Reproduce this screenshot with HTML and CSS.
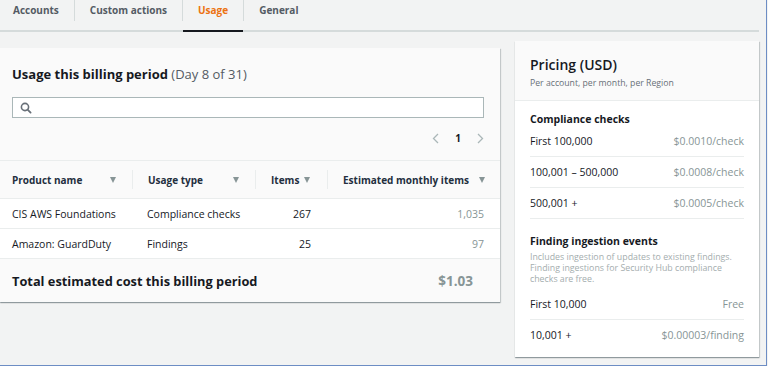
FILE: index.html
```html
<!DOCTYPE html>
<html lang="en">
  <head>
    <meta charset="UTF-8" />
    <meta name="viewport" content="width=device-width, initial-scale=1.0" />
    <title>Security Hub - Usage</title>
    <link rel="stylesheet" href="styles.css">
  </head>
  <body>
    <div class="frame">
      <div class="tabs">
        <div class="tab first">Accounts</div>
        <div class="tab-sep"></div>
        <div class="tab">Custom actions</div>
        <div class="tab-sep"></div>
        <div class="tab active">Usage</div>
        <div class="tab-sep"></div>
        <div class="tab">General</div>
      </div>

      <div class="content">
        <div class="panel usage">
          <div class="usage-head">
            <h2>Usage this billing period <span class="day">(Day 8 of 31)</span></h2>
            <div class="search">
              <svg width="12" height="12" viewBox="0 0 12 12">
                <circle cx="5" cy="5" r="3.6" fill="none" stroke="#687078" stroke-width="1.6" />
                <line x1="7.6" y1="7.6" x2="10.6" y2="10.6" stroke="#687078" stroke-width="1.8" stroke-linecap="round" />
              </svg>
            </div>
            <div class="pager">
              <svg width="7" height="11" viewBox="0 0 7 11"><polyline points="6,1 1.5,5.5 6,10" fill="none" stroke="#aab7b8" stroke-width="1.3" /></svg>
              <span class="page">1</span>
              <svg width="7" height="11" viewBox="0 0 7 11"><polyline points="1,1 5.5,5.5 1,10" fill="none" stroke="#aab7b8" stroke-width="1.3" /></svg>
            </div>
          </div>

          <div class="grid">
            <div class="th c1"><div class="th-in sep">Product name <i class="sort"></i></div></div>
            <div class="th c2"><div class="th-in sep">Usage type <i class="sort"></i></div></div>
            <div class="th c3"><div class="th-in sep">Items <i class="sort"></i></div></div>
            <div class="th c4"><div class="th-in">Estimated monthly items <i class="sort"></i></div></div>

            <div class="td c1">CIS AWS Foundations</div>
            <div class="td c2">Compliance checks</div>
            <div class="td c3 num">267</div>
            <div class="td c4 num muted">1,035</div>

            <div class="td c1">Amazon: GuardDuty</div>
            <div class="td c2">Findings</div>
            <div class="td c3 num">25</div>
            <div class="td c4 num muted">97</div>
          </div>

          <div class="usage-foot">
            <span>Total estimated cost this billing period</span>
            <span class="total">$1.03</span>
          </div>
        </div>

        <div class="panel pricing">
          <div class="pricing-head">
            <h2>Pricing (USD)</h2>
            <p>Per account, per month, per Region</p>
          </div>
          <div class="pricing-body">
            <h3>Compliance checks</h3>
            <div class="price-row"><span>First 100,000</span><span class="price">$0.0010/check</span></div>
            <div class="price-row"><span>100,001 – 500,000</span><span class="price">$0.0008/check</span></div>
            <div class="price-row"><span>500,001 +</span><span class="price">$0.0005/check</span></div>

            <h3 class="second">Finding ingestion events</h3>
            <p class="desc">Includes ingestion of updates to existing findings. Finding ingestions for Security Hub compliance checks are free.</p>
            <div class="price-row"><span>First 10,000</span><span class="price">Free</span></div>
            <div class="price-row last"><span>10,001 +</span><span class="price">$0.00003/finding</span></div>
          </div>
        </div>
      </div>
    </div>
  </body>
</html>
```

FILE: styles.css
```css
body {
  margin: 0;
  padding: 0;
  font-family: "Open Sans", "Noto Sans", sans-serif;
  background-color: #f2f3f3;
  color: #16191f;
}

.frame {
  width: 766px;
  height: 365px;
  border-right: 1px solid #6d8dc4;
  border-bottom: 1px solid #6d8dc4;
  overflow: hidden;
}

/* tabs */
.tabs {
  display: flex;
  width: 759px;
  height: 30px;
  border-bottom: 2px solid #d5dbdb;
}

.tab {
  padding: 0 15px;
  height: 30px;
  line-height: 21px;
  font-size: 10px;
  font-weight: 700;
  color: #545b64;
  white-space: nowrap;
}

.tab.first {
  padding-left: 13px;
}

.tab.active {
  color: #ec7211;
  border-bottom: 2px solid #16191f;
}

.tab-sep {
  width: 1px;
  height: 21px;
  background-color: #d5dbdb;
}

.content {
  display: flex;
  align-items: flex-start;
  gap: 15px;
}

.panel {
  background: #fff;
  box-shadow: 0 1px 1px 0 rgba(0, 28, 36, 0.3), 1px 1px 1px 0 rgba(0, 28, 36, 0.15);
}

/* usage panel */
.usage {
  width: 500px;
  margin-top: 16px;
}

.usage-head {
  background-color: #fafafa;
  padding: 18px 16px 12px 12px;
}

.usage-head h2 {
  margin: 0;
  font-size: 13px;
  line-height: 16px;
  font-weight: 700;
}

.usage-head .day {
  font-weight: 400;
  color: #545b64;
}

.search {
  margin-top: 15px;
  height: 19px;
  border: 1px solid #aab7b8;
  background: #fff;
  display: flex;
  align-items: center;
  padding-left: 7px;
}

.pager {
  height: 20px;
  margin-top: 10px;
  display: flex;
  align-items: center;
  justify-content: flex-end;
  gap: 16px;
}

.page {
  font-size: 10px;
  font-weight: 700;
}

.grid {
  display: grid;
  grid-template-columns: 133px 123px 72px 172px;
  border-top: 1px solid #eaeded;
}

.th {
  height: 37px;
  display: flex;
  align-items: center;
  background-color: #fafafa;
  font-size: 10px;
  font-weight: 700;
  color: #232f3e;
  padding-left: 15px;
}

.th-in {
  flex: 1;
  height: 19px;
  display: flex;
  align-items: center;
  justify-content: space-between;
  padding-right: 16px;
}

.th-in.sep {
  border-right: 1px solid #eaeded;
}

.th.c1 {
  padding-left: 12px;
}

.th.c3 .th-in {
  padding-right: 17px;
}

.th.c4 .th-in {
  padding-right: 15px;
}

.sort {
  width: 0;
  height: 0;
  border-left: 3.5px solid transparent;
  border-right: 3.5px solid transparent;
  border-top: 6px solid #879596;
}

.td {
  height: 29px;
  border-top: 1px solid #eaeded;
  display: flex;
  align-items: center;
  font-size: 10.5px;
  color: #16191f;
}

.td.c1 {
  padding-left: 12px;
}

.td.c2 {
  padding-left: 14px;
}

.td.num {
  justify-content: flex-end;
}

.td.c3 {
  padding-right: 17px;
}

.td.c4 {
  padding-right: 16px;
}

.muted {
  color: #879596 !important;
}

.usage-foot {
  height: 43px;
  border-top: 1px solid #eaeded;
  background-color: #fafafa;
  display: flex;
  align-items: center;
  justify-content: space-between;
  padding: 0 27px 0 12px;
  font-size: 12.8px;
  font-weight: 700;
}

.usage-foot .total {
  color: #879596;
  font-size: 13.5px;
}

/* pricing panel */
.pricing {
  width: 244px;
  margin-top: 9px;
}

.pricing-head {
  background-color: #fafafa;
  padding: 15px 15px 0;
  height: 44px;
  border-bottom: 1px solid #eaeded;
}

.pricing-head h2 {
  margin: 0;
  font-size: 14px;
  line-height: 18px;
  font-weight: 600;
}

.pricing-head p {
  margin: 3px 0 0;
  font-size: 8.7px;
  line-height: 12px;
  color: #687078;
}

.pricing-body {
  padding: 11px 15px 7px;
}

.pricing-body h3 {
  margin: 0;
  font-size: 10.5px;
  line-height: 14px;
  font-weight: 700;
}

.pricing-body h3.second {
  margin-top: 15px;
}

.price-row {
  height: 30px;
  border-bottom: 1px solid #eaeded;
  display: flex;
  align-items: center;
  justify-content: space-between;
  font-size: 10.5px;
}

.price-row.last {
  border-bottom: none;
}

.price {
  color: #879596;
}

.desc {
  margin: 4px 0 4px;
  font-size: 8.8px;
  line-height: 11px;
  color: #a4adae;
}
```
